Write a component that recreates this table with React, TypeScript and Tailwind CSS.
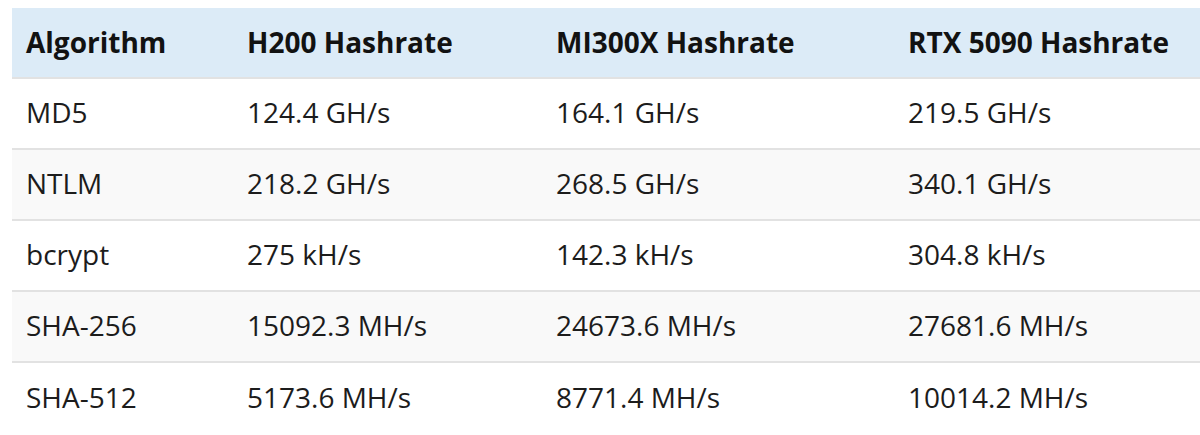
import React from "react";

const rows = [
  ["MD5", "124.4 GH/s", "164.1 GH/s", "219.5 GH/s"],
  ["NTLM", "218.2 GH/s", "268.5 GH/s", "340.1 GH/s"],
  ["bcrypt", "275 kH/s", "142.3 kH/s", "304.8 kH/s"],
  ["SHA-256", "15092.3 MH/s", "24673.6 MH/s", "27681.6 MH/s"],
  ["SHA-512", "5173.6 MH/s", "8771.4 MH/s", "10014.2 MH/s"],
];

export default function App() {
  return (
    <div
      className="w-[1200px] h-[435px] overflow-hidden bg-white pl-[12px] pt-[8px]"
      style={{ fontFamily: '"Open Sans", sans-serif' }}
    >
      <table className="w-[1220px] border-collapse text-[28px] leading-none text-[#1c1c1c] table-fixed">
        <colgroup>
          <col className="w-[221px]" />
          <col className="w-[309px]" />
          <col className="w-[352px]" />
          <col className="w-[338px]" />
        </colgroup>
        <thead>
          <tr className="bg-[#dcebf7] h-[70px] border-b-2 border-[#e2e2e2]">
            {["Algorithm", "H200 Hashrate", "MI300X Hashrate", "RTX 5090 Hashrate"].map((h) => (
              <th key={h} className="text-left font-bold pl-[14px] pb-[1px] text-[#121212] align-middle">
                {h}
              </th>
            ))}
          </tr>
        </thead>
        <tbody>
          {rows.map((r, i) => (
            <tr
              key={i}
              className={`h-[71px] ${i < rows.length - 1 ? "border-b-2 border-[#e2e2e2]" : ""} ${i % 2 === 1 ? "bg-[#f9f9f9]" : "bg-white"}`}
            >
              {r.map((c, j) => (
                <td key={j} className="pl-[14px] pb-[3px] align-middle">
                  {c}
                </td>
              ))}
            </tr>
          ))}
        </tbody>
      </table>
    </div>
  );
}
